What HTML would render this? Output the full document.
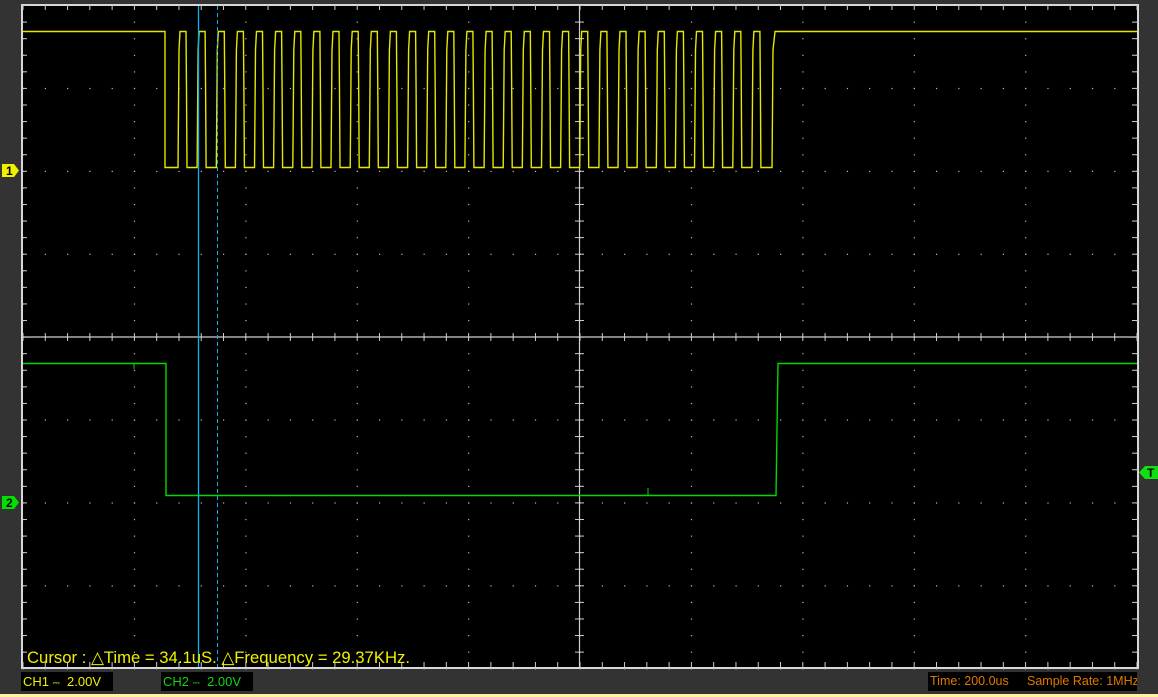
<!DOCTYPE html>
<html><head><meta charset="utf-8"><style>
html,body{margin:0;padding:0;background:#333;width:1158px;height:697px;overflow:hidden;font-family:"Liberation Sans",Arial,sans-serif}
svg{position:absolute;left:0;top:0}
.box{position:absolute;background:#000;height:19px;top:672px;font-size:13px;line-height:19px;white-space:nowrap;overflow:hidden;box-sizing:border-box}
.box span.a{position:absolute;top:0}
</style></head><body>
<svg id="s" width="1158" height="697" xmlns="http://www.w3.org/2000/svg">
<rect x="0" y="0" width="1158" height="697" fill="#333"/>
<rect x="21" y="4" width="1118" height="665" fill="#d8d8d8"/>
<rect x="23" y="6" width="1114" height="661" fill="#000"/>
<g id="grid"></g>
<line x1="23" y1="337" x2="1137" y2="337" stroke="#cfcfcf" stroke-width="1.2"/>
<line x1="579.5" y1="6" x2="579.5" y2="667" stroke="#cfcfcf" stroke-width="1.2"/>
<polyline id="y" fill="none" stroke="#e6e600" stroke-width="1.4"/>
<polyline points="23,363.5 166,363.5 166,495.5 776,495.5 778,363.5 1137,363.5" fill="none" stroke="#00d800" stroke-width="1.4"/>
<line x1="134" y1="363" x2="134" y2="369" stroke="#00d800"/>
<line x1="648" y1="488" x2="648" y2="496" stroke="#00d800"/>
<line x1="198.5" y1="6" x2="198.5" y2="667" stroke="#10b0f0" stroke-width="1.3"/>
<line x1="217.5" y1="6" x2="217.5" y2="667" stroke="#10b0f0" stroke-width="1" stroke-dasharray="4,3"/>
<polygon points="2,164 14,164 19,170.5 14,177 2,177" fill="#f0f000"/>
<text x="6" y="175" font-size="12" font-weight="bold" fill="#000" font-family="Liberation Sans">1</text>
<polygon points="2,496 14,496 19,502.5 14,509 2,509" fill="#00e000"/>
<text x="6" y="507" font-size="12" font-weight="bold" fill="#000" font-family="Liberation Sans">2</text>
<polygon points="1139,472.5 1145,466 1158,466 1158,479 1145,479" fill="#10e010"/>
<text x="1147" y="477" font-size="12" font-weight="bold" fill="#000" font-family="Liberation Sans">T</text>
<text x="27" y="663" font-size="16.8" fill="#f0f000" font-family="Liberation Sans" textLength="383" lengthAdjust="spacingAndGlyphs">Cursor : △Time = 34.1uS. △Frequency = 29.37KHz.</text>
<rect x="0" y="694" width="1158" height="3" fill="#fff3a0"/>
</svg>
<div class="box" style="left:21px;width:92px;color:#f0f000;padding-left:2px">CH1 <span style="font-size:9px">⎓</span>&nbsp;&nbsp;2.00V</div>
<div class="box" style="left:161px;width:92px;color:#10d810;padding-left:2px">CH2 <span style="font-size:9px">⎓</span>&nbsp;&nbsp;2.00V</div>
<div class="box" style="left:928px;width:209px;color:#e07800;font-size:12.5px"><span class="a" style="left:2px">Time: 200.0us</span><span class="a" style="left:99px">Sample Rate: 1MHz</span></div>
<script>
var g=document.getElementById('grid'),h='';
var x0=23,dx=111.4,y0=5.5,dy=82.9;
for(var i=0;i<=10;i++){var X=x0+dx*i;
 for(var yy=y0;yy<=667;yy+=dy/5){h+='<rect x="'+(X-0.5)+'" y="'+(yy-0.5)+'" width="1.2" height="1.2" fill="#bbb"/>';}
}
for(var j=0;j<=8;j++){var Y=y0+dy*j;
 for(var xx=x0;xx<=1137;xx+=dx/5){h+='<rect x="'+(xx-0.5)+'" y="'+(Y-0.5)+'" width="1.2" height="1.2" fill="#bbb"/>';}
}
for(var xx=x0;xx<=1137;xx+=dx/5){h+='<line x1="'+xx+'" y1="333" x2="'+xx+'" y2="341" stroke="#cfcfcf"/>';
 h+='<line x1="'+xx+'" y1="662" x2="'+xx+'" y2="667" stroke="#cfcfcf"/><line x1="'+xx+'" y1="6" x2="'+xx+'" y2="10" stroke="#cfcfcf"/>';}
for(var yy=y0;yy<=667;yy+=dy/5){h+='<line x1="575" y1="'+yy+'" x2="584" y2="'+yy+'" stroke="#cfcfcf"/>';
 h+='<line x1="23" y1="'+yy+'" x2="27" y2="'+yy+'" stroke="#cfcfcf"/><line x1="1132" y1="'+yy+'" x2="1137" y2="'+yy+'" stroke="#cfcfcf"/>';}
g.innerHTML=h;
var p='23,31.5 165,31.5 165,167.5 ';
for(var k=0;k<=30;k++){var H=180+19.13*k;
 p+=(H-2).toFixed(1)+',167.5 '+(H-1.5).toFixed(1)+',110 '+(H-1).toFixed(1)+',50 '+H.toFixed(1)+',31.5 '+(H+6).toFixed(1)+',31.5 '+(H+6.5).toFixed(1)+',90 '+(H+7).toFixed(1)+',167.5 ';}
p+='772,167.5 772.5,110 773,50 775,31.5 1137,31.5';
document.getElementById('y').setAttribute('points',p);
</script>
</body></html>
